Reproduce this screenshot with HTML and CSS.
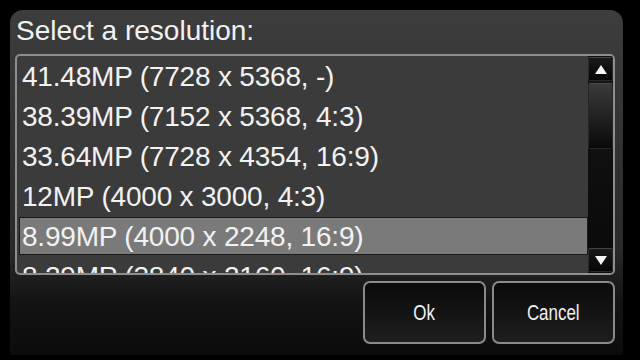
FILE: index.html
```html
<!DOCTYPE html>
<html>
<head>
<meta charset="utf-8">
<link rel="stylesheet" href="styles.css">
</head>
<body>
<div class="panel">
  <div class="title">Select a resolution:</div>
  <div class="list">
    <div class="rows">
      <div class="row">41.48MP (7728 x 5368, -)</div>
      <div class="row">38.39MP (7152 x 5368, 4:3)</div>
      <div class="row">33.64MP (7728 x 4354, 16:9)</div>
      <div class="row">12MP (4000 x 3000, 4:3)</div>
      <div class="row sel">8.99MP (4000 x 2248, 16:9)</div>
      <div class="row">8.29MP (3840 x 2160, 16:9)</div>
    </div>
    <div class="scroll">
      <div class="sbtn"><svg width="12" height="9" viewBox="0 0 12 9"><polygon points="6,0 12,9 0,9" fill="#f4f4f4"/></svg></div>
      <div class="track"><div class="thumb"></div></div>
      <div class="sbtn"><svg width="12" height="9" viewBox="0 0 12 9"><polygon points="0,0 12,0 6,9" fill="#f4f4f4"/></svg></div>
    </div>
  </div>
  <div class="buttons">
    <div class="btn"><span class="label">Ok</span></div>
    <div class="btn"><span class="label">Cancel</span></div>
  </div>
</div>
</body>
</html>
```
FILE: styles.css
```css
html, body {
  margin: 0;
  padding: 0;
  background: #000;
}
body {
  width: 640px;
  height: 360px;
  overflow: hidden;
  font-family: "Liberation Sans", Arial, sans-serif;
  color: #f2f2f2;
}
.panel {
  box-sizing: border-box;
  margin: 10px 0 0 10px;
  width: 613px;
  height: 345px;
  padding: 5px 8px 0 5px;
  border-radius: 13px 13px 0 0;
  background: linear-gradient(#3d3d3d 0px, #333 120px, #2a2a2a 240px, #141414 290px, #0b0b0b 345px);
}
.title {
  font-size: 28px;
  line-height: 32px;
  padding-left: 1px;
  margin-bottom: 7px;
}
.list {
  box-sizing: border-box;
  display: flex;
  height: 221px;
  border: 2px solid #8e8e8e;
  border-radius: 5px;
  background: #3b3b3b;
  overflow: hidden;
}
.rows {
  flex: 1;
  overflow: hidden;
}
.row {
  box-sizing: border-box;
  height: 40px;
  padding: 2px 0 0 5px;
  font-size: 28px;
  line-height: 38px;
  letter-spacing: -0.2px;
  white-space: nowrap;
}
.row.sel {
  height: 38px;
  margin: 1px 0 1px 2px;
  padding: 1px 0 0 2px;
  line-height: 35px;
  background: #7a7a7a;
  border: 1px solid #1a1a1a;
}
.scroll {
  width: 25px;
  display: flex;
  flex-direction: column;
  padding: 1px 0;
  background: #0e0e0e;
}
.sbtn {
  box-sizing: border-box;
  height: 24px;
  display: flex;
  align-items: center;
  justify-content: center;
  background: linear-gradient(#1a1a1a, #050505);
  border: 1px solid #2a2a2a;
  border-top-color: #444;
  border-radius: 2px;
}
.track {
  flex: 1;
  padding-top: 2px;
  background: linear-gradient(#141414, #0a0a0a);
}
.thumb {
  box-sizing: border-box;
  height: 66px;
  background: linear-gradient(#3a3a3a, #0a0a0a);
  border: 1px solid #262626;
  border-top-color: #4a4a4a;
  border-radius: 2px;
}
.buttons {
  display: flex;
  justify-content: flex-end;
  gap: 6px;
  margin-top: 6px;
}
.btn {
  box-sizing: border-box;
  width: 123px;
  height: 63px;
  border: 2px solid #8a8a8a;
  border-radius: 7px;
  background: linear-gradient(#0a0a0a, #1e1e1e);
  display: flex;
  align-items: center;
  justify-content: center;
  font-family: "Liberation Sans", Arial, sans-serif;
  font-size: 22px;
  color: #f0f0f0;
}
.label {
  display: inline-block;
  transform: scaleX(0.77);
}
```
